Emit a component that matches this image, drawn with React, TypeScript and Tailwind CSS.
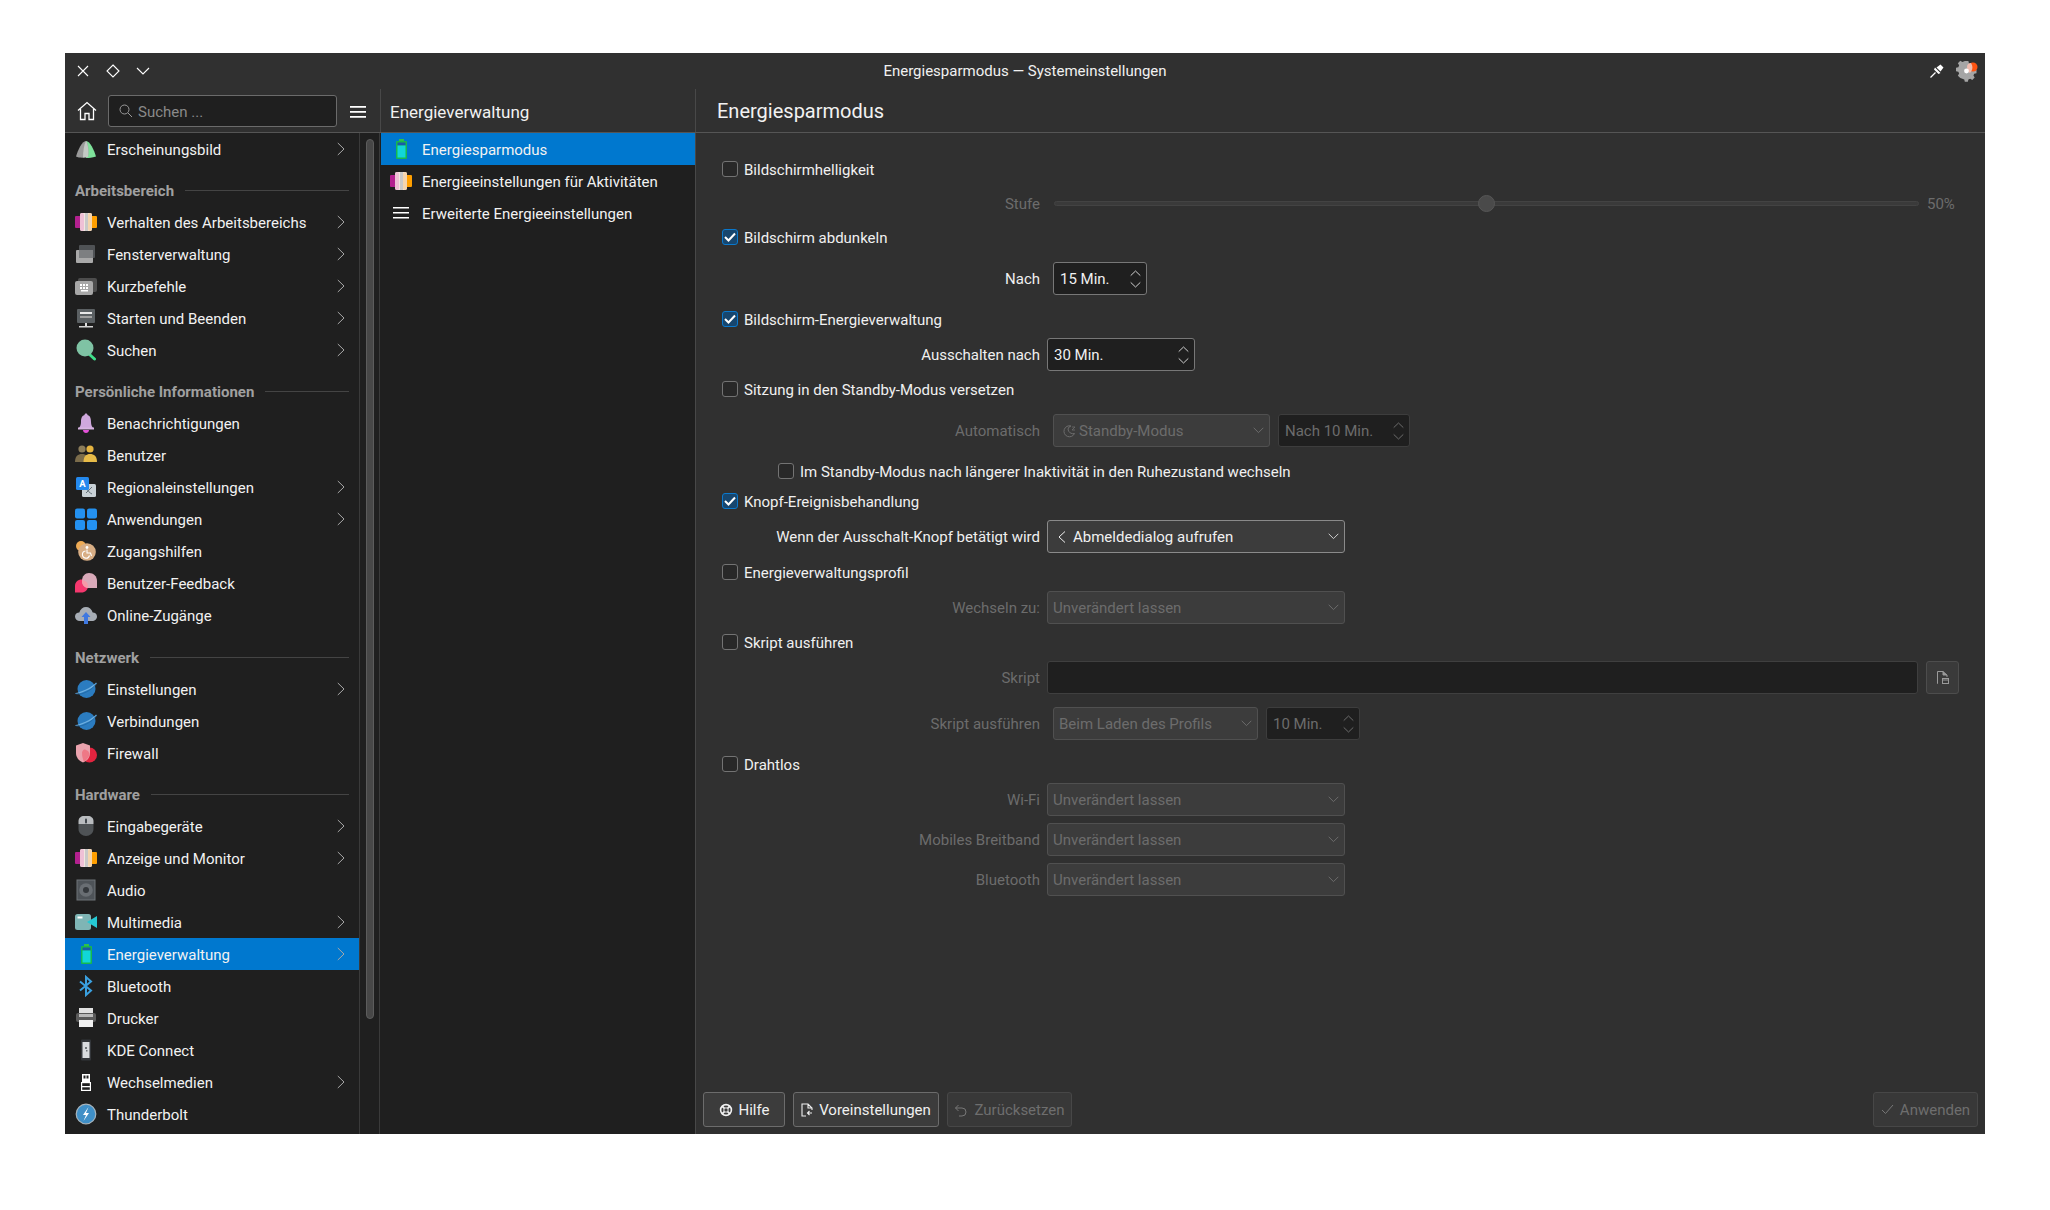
import type { ReactNode } from "react";

/* ---------- small line icons ---------- */
function ChevronRight({ className }: { className?: string }) {
  return (
    <svg width="8" height="14" viewBox="0 0 8 14" fill="none" stroke="currentColor" className={className}>
      <path d="M0.8 1 L7 7 L0.8 13" />
    </svg>
  );
}
function ChevronDown({ className }: { className?: string }) {
  return (
    <svg width="11" height="7" viewBox="0 0 11 7" fill="none" stroke="currentColor" className={className}>
      <path d="M0.7 0.8 L5.5 5.6 L10.3 0.8" />
    </svg>
  );
}
function SpinArrows({ className }: { className?: string }) {
  return (
    <svg width="11" height="18" viewBox="0 0 11 18" fill="none" stroke="currentColor" className={className}>
      <path d="M0.7 5.6 L5.5 1 L10.3 5.6" />
      <path d="M0.7 12.4 L5.5 17 L10.3 12.4" />
    </svg>
  );
}

/* ---------- sidebar icons, all on a 22x22 box ---------- */
function Ico({ children }: { children: ReactNode }) {
  return (
    <svg width="22" height="22" viewBox="0 0 22 22" className="shrink-0">
      {children}
    </svg>
  );
}
const IconAppearance = (
  <Ico>
    <path d="M11 3 C15 3 19 12 21 18.5 C17 20 14 20 11 20 Z" fill="#7ee29a" />
    <path d="M11 3 C7 3 3 12 1 18.5 C4 20 9 20 13 19 C14 13 13.5 6 11 3Z" fill="#9a9a9a" />
    <path d="M11 3 C13 6 14 13 13 19 L8 19.6 C8 13 9 7 11 3Z" fill="#c4c9c5" />
  </Ico>
);
const IconBehavior = (
  <Ico>
    <rect x="0" y="5" width="7" height="12" rx="1" fill="#b3218f" />
    <rect x="15" y="5" width="7" height="12" rx="1" fill="#ff9f00" />
    <rect x="5" y="2" width="12" height="18" rx="2" fill="#f3e6e0" />
    <rect x="5" y="2" width="4" height="18" rx="2" fill="#efc0d6" />
    <rect x="13" y="2" width="4" height="18" rx="2" fill="#f5d5ae" />
    <rect x="10" y="2" width="3" height="18" fill="#c9c9c9" />
  </Ico>
);
const IconWindows = (
  <Ico>
    <rect x="4" y="2" width="16" height="13" rx="1" fill="#4f5255" />
    <rect x="1" y="7" width="17" height="13" rx="1" fill="#a9a9a9" />
    <rect x="4" y="7" width="14" height="8" fill="#7d7f81" />
  </Ico>
);
const IconKeyboard = (
  <Ico>
    <rect x="3" y="3" width="19" height="14" rx="2" fill="#4d4d4d" />
    <rect x="0" y="6" width="18" height="14" rx="2" fill="#a7a7a7" />
    <path d="M5 9h2v2H5zM8 9h2v2H8zM11 9h2v2h-2zM5 12h2v2H5zM8 12h2v2H8zM11 12h2v2h-2zM6 15h7v1.5H6z" fill="#fff" />
  </Ico>
);
const IconStartup = (
  <Ico>
    <rect x="2" y="2" width="18" height="14" rx="1" fill="#5b6063" />
    <rect x="5" y="5" width="12" height="2" fill="#e8e8e8" />
    <rect x="5" y="9" width="12" height="2" fill="#a0a0a0" />
    <rect x="10" y="16" width="2" height="3" fill="#ddd" />
    <rect x="4" y="19" width="14" height="1.5" fill="#d4d4d4" />
  </Ico>
);
const IconSearch = (
  <Ico>
    <path d="M14 15 L19.5 20" stroke="#3fe08a" strokeWidth="3" strokeLinecap="round" />
    <circle cx="10" cy="9" r="8.5" fill="#7fc3a4" />
  </Ico>
);
const IconBell = (
  <Ico>
    <path d="M11 1.5 C12 1.5 12.5 2.2 12.5 3 C15.5 4 16 7 16 10 C16 13 17 15 19 17 H3 C5 15 6 13 6 10 C6 7 6.5 4 9.5 3 C9.5 2.2 10 1.5 11 1.5Z" fill="#cfa8dd" />
    <rect x="3" y="15.5" width="16" height="2" fill="#d7b4e2" />
    <path d="M8 18 H14 C14 20 12.5 21 11 21 C9.5 21 8 20 8 18Z" fill="#e452d8" />
  </Ico>
);
const IconUsers = (
  <Ico>
    <circle cx="7" cy="5" r="3.6" fill="#8c7d5a" />
    <path d="M0 18 C0 12 3 10 7 10 C11 10 14 12 14 18Z" fill="#7b6c4b" />
    <circle cx="15" cy="5" r="3.6" fill="#e5b440" />
    <path d="M8.5 18 C8.5 12 11.5 10 15 10 C19 10 22 12 22 18Z" fill="#e7bb48" />
  </Ico>
);
const IconRegion = (
  <Ico>
    <rect x="7" y="8" width="14" height="13" rx="1.5" fill="#c9d1d6" />
    <path d="M11 17 L17 11 M11.5 12 C12.5 15 15 17 17 18" stroke="#66727a" strokeWidth="1" fill="none" />
    <rect x="1" y="1" width="13" height="13" rx="1.5" fill="#2489ee" />
    <text x="7.5" y="11" fontSize="9.5" fontWeight="700" textAnchor="middle" fill="#fff" fontFamily="Roboto, sans-serif">A</text>
  </Ico>
);
const IconApps = (
  <Ico>
    <rect x="0" y="0.5" width="10" height="10" rx="2" fill="#2491f0" />
    <rect x="12" y="0.5" width="10" height="10" rx="2" fill="#2491f0" />
    <rect x="0" y="12" width="10" height="10" rx="2" fill="#2491f0" />
    <rect x="12" y="12" width="10" height="10" rx="2" fill="#2491f0" />
  </Ico>
);
const IconAccess = (
  <Ico>
    <circle cx="6" cy="6" r="5" fill="#eeab55" />
    <circle cx="12" cy="12" r="8.8" fill="#d8ae85" />
    <circle cx="12" cy="7.5" r="1.4" fill="#fff" />
    <path d="M12 9.5 V13 H15.5 L16.5 16 M10.5 11 A3.6 3.6 0 1 0 14.5 15.5" stroke="#fff" strokeWidth="1.1" fill="none" />
  </Ico>
);
const IconFeedback = (
  <Ico>
    <path d="M0 20.5 V14 C0 10 3 7.5 6.5 7.5 C10 7.5 13 10 13 14 C13 18 10 20.5 6.5 20.5Z" fill="#f5386e" />
    <path d="M7 9 C7 4 10 1 14 1 C18.5 1 22 4 22 9 V16 H14 C10 16 7 13.5 7 9Z" fill="#d9aab9" />
    <path d="M7.3 8 C10.5 8.5 13 10.7 13 14 C13 14.7 12.9 15.4 12.7 15.9 C9.5 15.5 7 12.8 7 9Z" fill="#f79aa8" />
  </Ico>
);
const IconCloud = (
  <Ico>
    <path d="M5 17 C2 17 0 15 0 12.5 C0 10 2 8.5 4.3 8.5 C5.2 5 8 3 11 3 C14 3 16.8 5 17.7 8.5 C20 8.5 22 10 22 12.5 C22 15 20 17 17 17Z" fill="#a7adb5" />
    <path d="M11 8 L15.5 13 H13 V20 H9 V13 H6.5Z" fill="#3f78e0" />
  </Ico>
);
const IconPlanet = (
  <Ico>
    <circle cx="11.5" cy="11" r="9" fill="#2b7cc0" />
    <path d="M0.5 15.5 C4 15.5 17 10.5 21.5 5" stroke="#6fb0e0" strokeWidth="1.2" fill="none" />
    <path d="M0.5 15.5 C5 18 17 13 21.5 5" stroke="#1c5f98" strokeWidth="0.6" fill="none" />
  </Ico>
);
const IconFirewall = (
  <Ico>
    <circle cx="14.5" cy="13" r="7.5" fill="#e3243f" />
    <path d="M1 3.5 L8 1 L15 3.5 V11 C15 15.5 12 19 8 20.5 C4 19 1 15.5 1 11Z" fill="#eaa3ae" />
    <path d="M9 7.5 C12 7.5 14.5 10 14.5 12.5 L14 14 C12.5 17 10.5 19 9 20 C7.8 17 7 14 7 11 C7 9.5 7.8 8.2 9 7.5Z" fill="#ef6a78" opacity="0.75" />
  </Ico>
);
const IconMouse = (
  <Ico>
    <path d="M3.5 9 H18.5 V14 C18.5 18 15 21 11 21 C7 21 3.5 18 3.5 14Z" fill="#4f5356" />
    <path d="M3.5 9 V6 C3.5 3 6 1 9 1 H13 C16 1 18.5 3 18.5 6 V9Z" fill="#b9bcbf" />
    <rect x="10" y="3.5" width="2" height="5" rx="1" fill="#40464c" />
  </Ico>
);
const IconAudio = (
  <Ico>
    <rect x="2" y="1" width="18" height="20" fill="#4e5358" stroke="#6f7478" strokeWidth="1" />
    <circle cx="11" cy="11" r="6.8" fill="#696e73" />
    <circle cx="11" cy="11" r="3" fill="#34383c" />
  </Ico>
);
const IconCamera = (
  <Ico>
    <rect x="0" y="3" width="16" height="16" rx="2.5" fill="#7fb5b5" />
    <rect x="2.5" y="5.5" width="5" height="2" fill="#fff" />
    <path d="M22 5 V17 L12 11Z" fill="#25c9d4" />
  </Ico>
);
const IconBattery = (
  <Ico>
    <rect x="9" y="1" width="5" height="3" fill="#30c04a" />
    <rect x="6" y="3" width="11" height="18" rx="1" fill="#17b84e" />
    <rect x="7.5" y="4.5" width="8" height="3" fill="#1c5aa8" />
    <rect x="7.5" y="7.5" width="8" height="12" fill="#11d6d8" />
  </Ico>
);
const IconBluetooth = (
  <Ico>
    <path d="M5 6.5 L16 15.5 L11 20 V2 L16 6.5 L5 15.5" fill="none" stroke="#3aa0e0" strokeWidth="2" />
  </Ico>
);
const IconPrinter = (
  <Ico>
    <rect x="4" y="1" width="14" height="6" fill="#e2e2e2" />
    <rect x="1" y="6" width="20" height="9" rx="2" fill="#5a5a5a" />
    <rect x="4" y="13" width="14" height="7" fill="#f0f0f0" />
    <rect x="4" y="7" width="14" height="3" fill="#b9b9b9" />
  </Ico>
);
const IconPhone = (
  <Ico>
    <rect x="6" y="0.5" width="10" height="21" rx="1" fill="#33363a" />
    <rect x="7.5" y="3" width="7" height="16" fill="#d9dcdf" />
    <path d="M10 8 h2 v2 h-2z M11 11 h1.5 v1.5 h-1.5z" fill="#70757a" />
  </Ico>
);
const IconUsb = (
  <Ico>
    <rect x="7" y="3" width="8" height="8" fill="#fff" />
    <rect x="8.5" y="4.5" width="2" height="3" fill="#222" />
    <rect x="11.5" y="4.5" width="2" height="3" fill="#222" />
    <rect x="6.6" y="11.6" width="8.8" height="7.8" fill="#1f1f1f" stroke="#fff" strokeWidth="1.2" />
    <rect x="7" y="15" width="8" height="1.3" fill="#fff" />
  </Ico>
);
const IconThunder = (
  <Ico>
    <circle cx="11" cy="11" r="9.8" fill="#3f8fc7" stroke="#a7b4bc" strokeWidth="1.2" />
    <path d="M13.5 4 L8 12 H11 L8.5 18 L14 10 H11Z" fill="#fff" />
  </Ico>
);
const IconLines = (
  <svg width="16" height="12" viewBox="0 0 16 12" className="shrink-0">
    <path d="M0 0h16v1.6H0zM0 5h16v1.6H0zM0 10h16v1.6H0z" fill="#fff" />
  </svg>
);

type Item = { label: string; icon: ReactNode; more?: boolean; active?: boolean };
type Group = { title?: string; tall?: boolean; items: Item[] };

const groups: Group[] = [
  { items: [{ label: "Erscheinungsbild", icon: IconAppearance, more: true }] },
  {
    title: "Arbeitsbereich",
    items: [
      { label: "Verhalten des Arbeitsbereichs", icon: IconBehavior, more: true },
      { label: "Fensterverwaltung", icon: IconWindows, more: true },
      { label: "Kurzbefehle", icon: IconKeyboard, more: true },
      { label: "Starten und Beenden", icon: IconStartup, more: true },
      { label: "Suchen", icon: IconSearch, more: true },
    ],
  },
  {
    title: "Persönliche Informationen",
    items: [
      { label: "Benachrichtigungen", icon: IconBell },
      { label: "Benutzer", icon: IconUsers },
      { label: "Regionaleinstellungen", icon: IconRegion, more: true },
      { label: "Anwendungen", icon: IconApps, more: true },
      { label: "Zugangshilfen", icon: IconAccess },
      { label: "Benutzer-Feedback", icon: IconFeedback },
      { label: "Online-Zugänge", icon: IconCloud },
    ],
  },
  {
    title: "Netzwerk",
    tall: true,
    items: [
      { label: "Einstellungen", icon: IconPlanet, more: true },
      { label: "Verbindungen", icon: IconPlanet },
      { label: "Firewall", icon: IconFirewall },
    ],
  },
  {
    title: "Hardware",
    items: [
      { label: "Eingabegeräte", icon: IconMouse, more: true },
      { label: "Anzeige und Monitor", icon: IconBehavior, more: true },
      { label: "Audio", icon: IconAudio },
      { label: "Multimedia", icon: IconCamera, more: true },
      { label: "Energieverwaltung", icon: IconBattery, more: true, active: true },
      { label: "Bluetooth", icon: IconBluetooth },
      { label: "Drucker", icon: IconPrinter },
      { label: "KDE Connect", icon: IconPhone },
      { label: "Wechselmedien", icon: IconUsb, more: true },
      { label: "Thunderbolt", icon: IconThunder },
    ],
  },
];

function NavRow({ item }: { item: Item }) {
  return (
    <div className={`flex h-[32px] items-center pl-[10px] ${item.active ? "bg-[#0078cf]" : ""}`}>
      <span className="mr-[10px] flex w-[22px] justify-center">{item.icon}</span>
      <span className="relative top-px flex-1 text-[#f2f2f2]">{item.label}</span>
      {item.more && <ChevronRight className="mr-[14px] text-[#a8a8a8]" />}
    </div>
  );
}

function Sidebar() {
  return (
    <aside className="w-[294px] shrink-0 overflow-hidden">
      {groups.map((g, i) => (
        <div key={i}>
          {g.title && (
            <div className={`flex items-center pl-[10px] pr-[10px] ${g.tall ? "h-[42px] pt-[10px]" : "h-[41px] pt-[9px]"}`}>
              <span className="relative top-px font-bold text-[#a0a0a0]">{g.title}</span>
              <span className="ml-[11px] h-px flex-1 bg-[#444444]" />
            </div>
          )}
          {g.items.map((item) => (
            <NavRow key={item.label} item={item} />
          ))}
        </div>
      ))}
    </aside>
  );
}

/* ---------- form pieces ---------- */
function CheckRow({ label, checked, className }: { label: string; checked?: boolean; className: string }) {
  return (
    <div className={`flex h-[16px] items-center ${className}`}>
      <span
        className={`mr-[6px] flex h-[16px] w-[16px] shrink-0 items-center justify-center rounded-[3px] border ${
          checked ? "border-[#0a78cc] bg-[#17466e]" : "border-[#737373] bg-[#282828]"
        }`}
      >
        {checked && (
          <svg width="12" height="10" viewBox="0 0 12 10" fill="none" stroke="#fff" strokeWidth="2">
            <path d="M1 5 L4.5 8.5 L11 1.5" />
          </svg>
        )}
      </span>
      <span className="relative top-px text-[#f0f0f0]">{label}</span>
    </div>
  );
}

function FieldRow({ label, off, className, children }: { label: string; off?: boolean; className: string; children: ReactNode }) {
  return (
    <div className={`flex h-[33px] items-center ${className}`}>
      <span className={`mr-[7px] w-[344px] shrink-0 text-right ${off ? "text-[#6c6c6c]" : "text-[#efefef]"}`}>{label}</span>
      {children}
    </div>
  );
}

function Combo({ text, off, className, icon }: { text: string; off?: boolean; className: string; icon?: ReactNode }) {
  return (
    <div
      className={`flex h-[33px] items-center justify-between rounded-[3px] border bg-[#3c3c3c] pr-[5px] ${
        off ? "border-[#505050] pl-[5px] text-[#6c6c6c]" : "border-[#8a8a8a] pl-[10px] text-[#f0f0f0]"
      } ${className}`}
    >
      <span className="flex items-center">
        {icon}
        {text}
      </span>
      <ChevronDown className={off ? "text-[#6c6c6c]" : "text-[#d0d0d0]"} />
    </div>
  );
}

function Spin({ text, off, className }: { text: string; off?: boolean; className: string }) {
  return (
    <div
      className={`flex h-[33px] items-center justify-between rounded-[3px] border bg-[#1f1f1f] pl-[6px] pr-[5px] ${
        off ? "border-[#3d3d3d] text-[#6c6c6c]" : "border-[#777777] text-[#f0f0f0]"
      } ${className}`}
    >
      <span>{text}</span>
      <SpinArrows className={off ? "text-[#6c6c6c]" : "text-[#d0d0d0]"} />
    </div>
  );
}

function FooterButton({ label, off, className, children }: { label: string; off?: boolean; className: string; children: ReactNode }) {
  return (
    <button
      className={`flex h-[35px] items-center justify-center rounded-[3px] border ${
        off ? "border-[#474747] bg-[#383838] text-[#6e6e6e]" : "border-[#6c6c6c] bg-[#3c3c3c] text-[#f0f0f0]"
      } ${className}`}
    >
      {children}
      <span className="ml-[6px]">{label}</span>
    </button>
  );
}

export default function App() {
  return (
    <div className="relative h-[1210px] w-[2050px] bg-white font-[family-name:Roboto,sans-serif] text-[15px] leading-[20px]">
      <div className="absolute left-[65px] top-[53px] flex h-[1081px] w-[1920px] flex-col bg-[#303030]">
        {/* title bar */}
        <div className="relative flex h-[36px] shrink-0 items-center text-[#f0f0f0]">
          <svg width="12" height="12" viewBox="0 0 12 12" fill="none" stroke="#fff" strokeWidth="1.1" className="absolute left-[12px] top-[12px]">
            <path d="M1 1 L11 11 M11 1 L1 11" />
          </svg>
          <svg width="14" height="14" viewBox="0 0 14 14" fill="none" stroke="#fff" strokeWidth="1.1" className="absolute left-[41px] top-[11px]">
            <path d="M7 1 L13 7 L7 13 L1 7Z" />
          </svg>
          <svg width="14" height="8" viewBox="0 0 14 8" fill="none" stroke="#fff" strokeWidth="1.1" className="absolute left-[71px] top-[14px]">
            <path d="M1 1 L7 7 L13 1" />
          </svg>
          <div className="w-full text-center">Energiesparmodus — Systemeinstellungen</div>
          <svg width="14" height="14" viewBox="0 0 14 14" className="absolute left-[1865px] top-[11px]">
            <path d="M6.5 3.5 L10.5 0.5 L13.5 3.5 L10.5 7.5 Z M5 3.5 L10.5 9 L8.5 10 L4 5.5 Z" fill="#fff" />
            <path d="M5.5 8.5 L0.5 13.5" stroke="#fff" strokeWidth="1.2" />
          </svg>
          <svg width="22" height="22" viewBox="0 0 22 22" className="absolute left-[1891px] top-[7px]">
            <path d="M9 1h4l.6 2.6 2.1.9 2.3-1.4 2.6 2.7-1.4 2.3.8 2.1 2 .6v3.8l-2.6.6-.8 2 1.4 2.3-2.7 2.7-2.3-1.4-2 .8-.6 2.6H9l-.6-2.6-2.1-.8L4 20.1 1.3 17.4l1.4-2.3-.9-2.1L-.8 12.4V8.6l2.6-.6.9-2.1L1.3 3.6 4 .9 6.3 2.3l2.1-.8z" fill="#a5a5a5" transform="translate(.7 0) scale(.9)" />
            <circle cx="17" cy="7" r="4.5" fill="#ff5412" />
            <path d="M11 7 C11 4 13 3 15 3 C17 6 17 10 14 13 C12 12 11 10 11 7Z" fill="#f0bdb0" />
            <circle cx="10.5" cy="11" r="2.4" fill="#fff" />
          </svg>
        </div>

        {/* tool row */}
        <div className="flex h-[44px] shrink-0 border-b border-[#555555]">
          <div className="flex w-[315px] shrink-0 items-start">
            <svg width="20" height="20" viewBox="0 0 20 20" fill="none" stroke="#fff" strokeWidth="1.3" className="ml-[12px] mt-[12px]">
              <path d="M1 9.5 L10 1.5 L19 9.5 M3.5 8 V18.5 H8 V12.5 H12 V18.5 H16.5 V8" />
            </svg>
            <div className="ml-[11px] mt-[6px] flex h-[32px] w-[229px] items-center rounded-[3px] border border-[#6b6b6b] bg-[#1f1f1f] pl-[10px] text-[#8a8a8a]">
              <svg width="14" height="14" viewBox="0 0 14 14" fill="none" stroke="#9a9a9a" strokeWidth="1" className="mr-[5px]">
                <circle cx="5.5" cy="5.5" r="4.5" />
                <path d="M9 9 L13 13" />
              </svg>
              <span className="relative top-px">Suchen ...</span>
            </div>
            <svg width="16" height="12" viewBox="0 0 16 12" className="ml-[13px] mt-[17px]">
              <path d="M0 0h16v1.7H0zM0 5h16v1.7H0zM0 10h16v1.7H0z" fill="#fff" />
            </svg>
          </div>
          <div className="flex w-[316px] shrink-0 items-center border-x border-[#484848] pl-[9px] text-[17px] text-[#f2f2f2]">
            <span className="relative top-px">Energieverwaltung</span>
          </div>
          <div className="flex flex-1 items-center pl-[21px] text-[20px] text-[#f2f2f2]">Energiesparmodus</div>
        </div>

        {/* body */}
        <div className="flex min-h-0 flex-1">
          <div className="flex shrink-0 bg-[#1f1f1f]">
            <Sidebar />
            <div className="w-[21px] border-x border-[#3a3a3a] pl-[6px] pt-[6px]">
              <div className="h-[880px] w-[8px] rounded-full border border-[#5c5c5c] bg-[#474747]" />
            </div>
          </div>

          <div className="w-[316px] shrink-0 border-r border-[#484848] bg-[#1f1f1f] pl-px">
            <div className="flex h-[32px] items-center bg-[#0078cf] pl-[9px]">
              <span className="mr-[10px] flex w-[22px] justify-center">{IconBattery}</span>
              <span className="relative top-px text-[#f2f2f2]">Energiesparmodus</span>
            </div>
            <div className="flex h-[32px] items-center pl-[9px]">
              <span className="mr-[10px] flex w-[22px] justify-center">{IconBehavior}</span>
              <span className="relative top-px text-[#f2f2f2]">Energieeinstellungen für Aktivitäten</span>
            </div>
            <div className="flex h-[32px] items-center pl-[9px]">
              <span className="mr-[10px] flex w-[22px] justify-center">{IconLines}</span>
              <span className="relative top-px text-[#f2f2f2]">Erweiterte Energieeinstellungen</span>
            </div>
          </div>

          {/* form */}
          <main className="flex min-w-0 flex-1 flex-col">
            <div className="flex-1">
              <CheckRow label="Bildschirmhelligkeit" className="ml-[26px] mt-[28px]" />
              <div className="mt-[16px] flex h-[20px] items-center">
                <span className="relative top-px mr-[14px] w-[344px] shrink-0 text-right text-[#6c6c6c]">Stufe</span>
                <div className="relative h-[5px] w-[865px] rounded-full border border-[#434343] bg-[#3a3a3a]">
                  <span className="absolute left-[423px] top-[-7px] h-[17px] w-[17px] rounded-full border border-[#565656] bg-[#4a4a4a]" />
                </div>
                <span className="relative top-px ml-[8px] text-[#6c6c6c]">50%</span>
              </div>
              <CheckRow label="Bildschirm abdunkeln" checked className="ml-[26px] mt-[16px]" />
              <FieldRow label="Nach" className="mt-[17px]">
                <Spin text="15 Min." className="ml-[6px] w-[94px]" />
              </FieldRow>
              <CheckRow label="Bildschirm-Energieverwaltung" checked className="ml-[26px] mt-[16px]" />
              <FieldRow label="Ausschalten nach" className="mt-[11px]">
                <Spin text="30 Min." className="w-[148px]" />
              </FieldRow>
              <CheckRow label="Sitzung in den Standby-Modus versetzen" className="ml-[26px] mt-[10px]" />
              <FieldRow label="Automatisch" off className="mt-[17px]">
                <Combo
                  text="Standby-Modus"
                  off
                  className="ml-[6px] w-[217px]"
                  icon={
                    <svg width="14" height="14" viewBox="0 0 14 14" fill="none" stroke="#6c6c6c" className="ml-[3px] mr-[3px]">
                      <path d="M9 2 A5.5 5.5 0 1 0 12.5 9.5 A5 5 0 0 1 6 5 A4 4 0 0 1 9 2Z" />
                      <path d="M10 3h3l-3 3h3" strokeWidth="0.8" />
                    </svg>
                  }
                />
                <Spin text="Nach 10 Min." off className="ml-[8px] w-[132px]" />
              </FieldRow>
              <CheckRow label="Im Standby-Modus nach längerer Inaktivität in den Ruhezustand wechseln" className="ml-[82px] mt-[16px]" />
              <CheckRow label="Knopf-Ereignisbehandlung" checked className="ml-[26px] mt-[14px]" />
              <FieldRow label="Wenn der Ausschalt-Knopf betätigt wird" className="mt-[11px]">
                <Combo
                  text="Abmeldedialog aufrufen"
                  className="w-[298px]"
                  icon={
                    <svg width="8" height="12" viewBox="0 0 8 12" fill="none" stroke="#f0f0f0" className="mr-[7px]">
                      <path d="M7 0.5 L1 6 L7 11.5" />
                    </svg>
                  }
                />
              </FieldRow>
              <CheckRow label="Energieverwaltungsprofil" className="ml-[26px] mt-[11px]" />
              <FieldRow label="Wechseln zu:" off className="mt-[11px]">
                <Combo text="Unverändert lassen" off className="w-[298px]" />
              </FieldRow>
              <CheckRow label="Skript ausführen" className="ml-[26px] mt-[10px]" />
              <FieldRow label="Skript" off className="mt-[11px]">
                <div className="h-[33px] w-[871px] rounded-[3px] border border-[#3f3f3f] bg-[#1f1f1f]" />
                <div className="ml-[8px] flex h-[33px] w-[33px] items-center justify-center rounded-[3px] border border-[#4d4d4d] bg-[#3a3a3a]">
                  <svg width="12" height="13" viewBox="0 0 12 13" fill="none" stroke="#9a9a9a">
                    <path d="M1 12.5 H0.5 V0.5 H6 L10 4 V6" />
                    <path d="M6 0.5 V4 H10" fill="#9a9a9a" />
                    <rect x="5.5" y="7.5" width="6" height="5" />
                    <path d="M5.5 9 H11.5" />
                  </svg>
                </div>
              </FieldRow>
              <FieldRow label="Skript ausführen" off className="mt-[13px]">
                <Combo text="Beim Laden des Profils" off className="ml-[6px] w-[205px]" />
                <Spin text="10 Min." off className="ml-[8px] w-[94px]" />
              </FieldRow>
              <CheckRow label="Drahtlos" className="ml-[26px] mt-[16px]" />
              <FieldRow label="Wi-Fi" off className="mt-[11px]">
                <Combo text="Unverändert lassen" off className="w-[298px]" />
              </FieldRow>
              <FieldRow label="Mobiles Breitband" off className="mt-[7px]">
                <Combo text="Unverändert lassen" off className="w-[298px]" />
              </FieldRow>
              <FieldRow label="Bluetooth" off className="mt-[7px]">
                <Combo text="Unverändert lassen" off className="w-[298px]" />
              </FieldRow>
            </div>

            <div className="flex h-[42px] shrink-0 items-start pl-[7px] pr-[7px]">
              <FooterButton label="Hilfe" className="w-[82px]">
                <svg width="14" height="14" viewBox="0 0 14 14" fill="none" stroke="#f0f0f0" strokeWidth="1.6">
                  <circle cx="7" cy="7" r="5.4" />
                  <circle cx="7" cy="7" r="2.2" strokeWidth="1" />
                  <path d="M3 3 L5.4 5.4 M11 3 L8.6 5.4 M3 11 L5.4 8.6 M11 11 L8.6 8.6" strokeWidth="1.8" />
                </svg>
              </FooterButton>
              <FooterButton label="Voreinstellungen" className="ml-[8px] w-[146px]">
                <svg width="12" height="14" viewBox="0 0 12 14" fill="none" stroke="#f0f0f0" strokeWidth="1.1">
                  <path d="M5 13 H1 V1 H7 L11 5 V7 M7 1 V5 H11" />
                  <path d="M11 10 H6.5 M8.5 8 L6.5 10 L8.5 12" />
                </svg>
              </FooterButton>
              <FooterButton label="Zurücksetzen" off className="ml-[8px] w-[125px]">
                <svg width="14" height="14" viewBox="0 0 14 14" fill="none" stroke="#777777">
                  <path d="M1.5 5 H8 A4 4 0 0 1 8 13 H5 M4.5 2 L1.5 5 L4.5 8" />
                </svg>
              </FooterButton>
              <FooterButton label="Anwenden" off className="ml-auto w-[105px]">
                <svg width="13" height="11" viewBox="0 0 13 11" fill="none" stroke="#777777">
                  <path d="M1 6 L4.5 9.5 L12 1" />
                </svg>
              </FooterButton>
            </div>
          </main>
        </div>
      </div>
    </div>
  );
}
